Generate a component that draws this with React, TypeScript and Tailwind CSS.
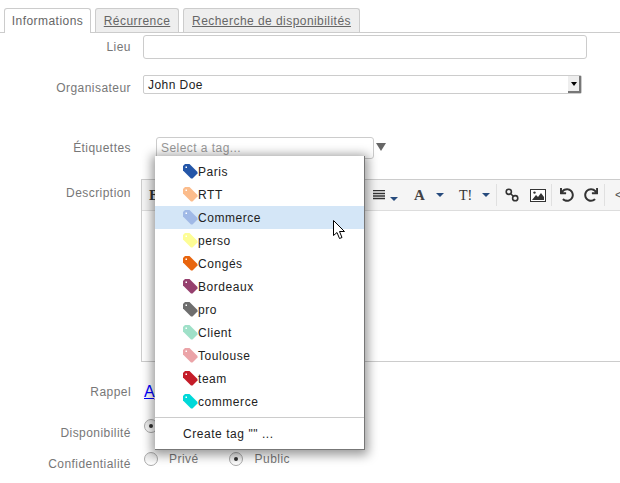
import { FaRedo, FaUndo } from "react-icons/fa";

const tags = [
  { name: "Paris", color: "#2456a8" },
  { name: "RTT", color: "#fbbc8c" },
  { name: "Commerce", color: "#a0b9e6", active: true },
  { name: "perso", color: "#fdfd96" },
  { name: "Congés", color: "#e8650e" },
  { name: "Bordeaux", color: "#96406e" },
  { name: "pro", color: "#6e6e6e" },
  { name: "Client", color: "#9fe0c8" },
  { name: "Toulouse", color: "#eba4a8" },
  { name: "team", color: "#c41c28" },
  { name: "commerce", color: "#00d8d8" },
];

function TagIcon({ color }: { color: string }) {
  return (
    <svg width="15" height="15" viewBox="0 0 15 15" className="shrink-0">
      <path d="M0 2 L2 0 H6.5 L14.5 8 V9.5 L9.5 14.5 H8 L0 6.5 Z" fill={color} />
      <rect x="2.5" y="2.5" width="1.5" height="1.5" fill="#fff" />
    </svg>
  );
}

function Caret({ className = "" }: { className?: string }) {
  return <span className={`mx-[5px] h-0 w-0 shrink-0 border-x-[4px] border-t-[4px] border-x-transparent border-t-[#274b7d] ${className}`} />;
}

function Radio({ checked }: { checked?: boolean }) {
  return (
    <span className="flex h-[14px] w-[14px] shrink-0 items-center justify-center rounded-full border border-[#aaa] bg-gradient-to-b from-[#e4e4e4] to-white">
      {checked && <span className="h-[4px] w-[4px] rounded-full bg-[#333]" />}
    </span>
  );
}

function Label({ children, className = "" }: { children: string; className?: string }) {
  return <div className={`w-[131px] shrink-0 text-right text-[#777] ${className}`}>{children}</div>;
}

function Sep({ className = "" }: { className?: string }) {
  return <span className={`h-[22px] w-px shrink-0 bg-[#e0e0e0] ${className}`} />;
}

function Toolbar() {
  return (
    <div className="flex h-[31px] items-center border-b border-[#ddd] bg-[#f5f5f5] tracking-normal text-[#333]">
      <span className="w-[231px] shrink-0 pl-[7px] font-['Liberation_Serif',serif] text-[15px] font-bold">B</span>
      <svg width="12" height="10" viewBox="0 0 12 10" className="shrink-0">
        <path d="M0 .5H12M0 3.5H12M0 6H12M0 8.5H12" stroke="#333" strokeWidth="1.4" />
      </svg>
      <Caret className="mt-[7px]" />
      <span className="ml-[11px] w-[11px] shrink-0 font-['Liberation_Serif',serif] text-[15px] font-bold text-[#444]">A</span>
      <Caret className="ml-[11px]" />
      <span className="ml-[10px] w-[13px] shrink-0 font-['Liberation_Serif',serif] text-[14px] text-[#333]">T!</span>
      <Caret className="ml-[10px]" />
      <Sep className="ml-[1px]" />
      <svg width="14" height="14" viewBox="0 0 14 14" className="ml-[8px] shrink-0" fill="none" stroke="#333" strokeWidth="1.6">
        <circle cx="3.8" cy="3.8" r="2.6" />
        <circle cx="10.2" cy="10.2" r="2.6" />
        <path d="M6 6 L8 8" />
      </svg>
      <svg width="16" height="13" viewBox="0 0 16 13" className="ml-[11px] shrink-0">
        <rect x=".5" y=".5" width="15" height="12" fill="#fff" stroke="#333" />
        <path d="M2 11 L6 6 L8 8 L11 4 L14 8 V11 Z" fill="#333" />
        <circle cx="4.5" cy="3.6" r="1.2" fill="#333" />
      </svg>
      <Sep className="ml-[5px]" />
      <FaUndo size={14} className="ml-[8px] shrink-0" />
      <FaRedo size={14} className="ml-[10px] shrink-0" />
      <Sep className="ml-[6px]" />
      <span className="ml-[10px] text-[#555]">&lt;</span>
    </div>
  );
}

export default function App() {
  return (
    <div className="relative h-[483px] w-[620px] overflow-hidden bg-white font-['Liberation_Sans',Arial,sans-serif] text-[12px] tracking-[0.45px] text-[#333]">
      {/* tabs */}
      <div className="flex h-[33px] items-end gap-[4px] border-b border-[#ccc] pl-[4px] pt-[8px]">
        <div className="-mb-px flex h-[25px] w-[87px] items-center justify-center rounded-t-[3px] border border-b-0 border-[#ccc] bg-white text-[#666]">Informations</div>
        <div className="flex h-[24px] w-[84px] items-center justify-center rounded-t-[3px] border border-b-0 border-[#ccc] bg-[#eee] text-[#666] underline">Récurrence</div>
        <div className="flex h-[24px] w-[177px] items-center justify-center rounded-t-[3px] border border-b-0 border-[#ccc] bg-[#eee] text-[#666] underline">Recherche de disponibilités</div>
      </div>

      <div className="mt-[2px] flex h-[24px] items-center">
        <Label>Lieu</Label>
        <div className="ml-[12px] h-[24px] w-[444px] rounded-[3px] border border-[#ccc]" />
      </div>

      <div className="mt-[16px] flex h-[19px] items-center">
        <Label className="mt-[7px]">Organisateur</Label>
        <div className="ml-[12px] flex h-[19px] w-[439px] items-center justify-between rounded-[2px] border border-[#ccc] pl-[4px] text-[#222]">
          John Doe
          <span className="flex h-[17px] w-[13px] items-center justify-center border-r-2 border-b-2 border-[#777] bg-[#eee]">
            <span className="h-0 w-0 border-x-[3px] border-t-[4px] border-x-transparent border-t-black" />
          </span>
        </div>
      </div>

      <div className="mt-[43px] flex h-[22px] items-center">
        <Label className="-mt-[1px]">Étiquettes</Label>
        <div className="ml-[25px] flex h-[22px] w-[218px] items-center rounded-[3px] border border-[#ccc] pl-[4px] text-[#999]">Select a tag...</div>
        <span className="ml-[2px] -mt-[2px] h-0 w-0 border-x-[5px] border-t-[8px] border-x-transparent border-t-[#666]" />
      </div>

      <div className="mt-[20px] flex items-start">
        <Label className="mt-[5px]">Description</Label>
        <div className="ml-[10px] h-[183px] flex-1 border-b border-l border-t border-[#ccc]">
          <Toolbar />
        </div>
      </div>

      <div className="mt-[21px] flex h-[18px] items-center">
        <Label>Rappel</Label>
        <span className="ml-[13px] text-[16px] text-[#00f] underline">Ajouter</span>
      </div>

      <div className="mt-[16px] flex h-[18px] items-center">
        <Label className="mt-[14px]">Disponibilité</Label>
        <span className="ml-[13px]"><Radio checked /></span>
      </div>

      <div className="mt-[15px] flex h-[18px] items-center">
        <Label className="mt-[10px]">Confidentialité</Label>
        <span className="ml-[13px]"><Radio /></span>
        <span className="ml-[11px] text-[#777]">Privé</span>
        <span className="ml-[30px]"><Radio checked /></span>
        <span className="ml-[12px] text-[#777]">Public</span>
      </div>

      {/* tag dropdown */}
      <div className="absolute left-[155px] top-[156px] w-[210px] border-r border-b border-[#777] bg-white py-[4px] tracking-[0.55px] text-[#222] shadow-[0_2px_10px_3px_rgba(0,0,0,0.4)]">
        {tags.map((tag) => (
          <div key={tag.name} className={`flex h-[23px] items-center pl-[28px] ${tag.active ? "bg-[#d4e6f7]" : ""}`}>
            <TagIcon color={tag.color} />
            {tag.name}
          </div>
        ))}
        <div className="mt-[4px] border-t border-[#ccc] pb-[2px] pl-[28px] pt-[7px]">Create tag "" ...</div>
      </div>

      {/* mouse cursor */}
      <svg width="13" height="20" viewBox="0 0 13 20" className="absolute left-[333px] top-[220px]">
        <path d="M.5.5 V15.5 L4 12.5 L6.5 18.5 L9 17.5 L6.5 11.5 H11.5 Z" fill="#fff" stroke="#000" />
      </svg>
    </div>
  );
}
